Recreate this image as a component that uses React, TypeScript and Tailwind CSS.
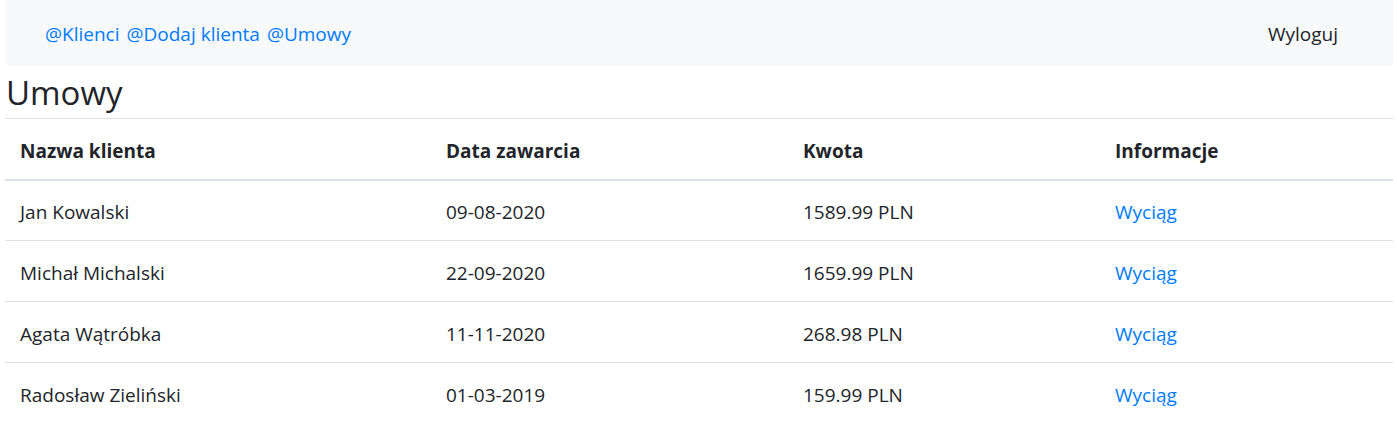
const rows = [
  { name: 'Jan Kowalski', date: '09-08-2020', amount: '1589.99 PLN' },
  { name: 'Michał Michalski', date: '22-09-2020', amount: '1659.99 PLN' },
  { name: 'Agata Wątróbka', date: '11-11-2020', amount: '268.98 PLN' },
  { name: 'Radosław Zieliński', date: '01-03-2019', amount: '159.99 PLN' },
];

function App() {
  return (
    <div className="min-h-screen bg-white pl-[5px] pr-[4px] text-[#212529] font-['Open_Sans',sans-serif] text-[19px]">
      {/* Top navigation */}
      <nav className="h-[66px] bg-[#f8f9fa] flex items-center justify-between pl-[40px] pr-[55px] pt-[2px]">
        <div className="text-[#007bff] flex gap-[7px]">
          <a href="#">@Klienci</a>
          <a href="#">@Dodaj klienta</a>
          <a href="#">@Umowy</a>
        </div>
        <a href="#" className="text-[#212529]">Wyloguj</a>
      </nav>

      <h2 className="text-[33px] leading-[50px] pl-[1px] pt-[2px]">Umowy</h2>

      <table className="w-full border-collapse text-left">
        <thead>
          <tr className="border-t border-[#dee2e6] border-b-2">
            <th className="w-[426px] px-[15px] pt-[4px] h-[61px] font-bold">Nazwa klienta</th>
            <th className="w-[357px] px-[15px] pt-[4px] font-bold">Data zawarcia</th>
            <th className="w-[312px] px-[15px] pt-[4px] font-bold">Kwota</th>
            <th className="px-[15px] pt-[4px] font-bold">Informacje</th>
          </tr>
        </thead>
        <tbody>
          {rows.map((r, i) => (
            <tr key={r.name} className={i > 0 ? 'border-t border-[#dee2e6]' : ''}>
              <td className="px-[15px] pt-[4px] h-[61px]">{r.name}</td>
              <td className="px-[15px] pt-[4px]">{r.date}</td>
              <td className="px-[15px] pt-[4px]">{r.amount}</td>
              <td className="px-[15px] pt-[4px]">
                <a href="#" className="text-[#007bff]">Wyciąg</a>
              </td>
            </tr>
          ))}
        </tbody>
      </table>
    </div>
  );
}

export default App;
